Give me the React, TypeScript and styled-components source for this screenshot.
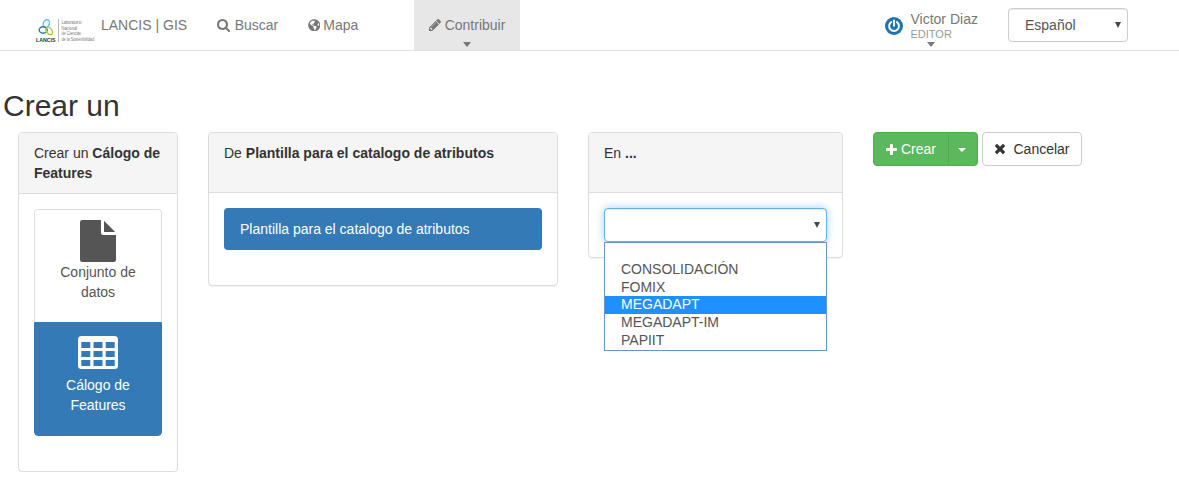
import React from 'react';
import styled, { createGlobalStyle, css } from 'styled-components';
import { FaGlobeAmericas } from 'react-icons/fa';

const GlobalStyle = createGlobalStyle`
  *, *::before, *::after { box-sizing: border-box; }
  body {
    margin: 0;
    background: #fff;
    color: #333;
    font: 14px/20px "Liberation Sans", Arial, sans-serif;
  }
`;

const Navbar = styled.header`
  display: flex;
  align-items: flex-start;
  height: 51px;
  border-bottom: 1px solid #e1e1e1;
  color: #777;
`;

const Brand = styled.div`
  display: flex;
  align-items: flex-start;
  width: 202px;
  padding-left: 35px;
`;

const LogoMark = styled.svg`
  display: block;
  width: 60px;
  height: 25px;
  margin: 18px 6px 0 0;
`;

const BrandName = styled.span`
  padding-top: 15px;
  white-space: nowrap;
`;

const NavItem = styled.a<{ $active?: boolean; $width: number }>`
  display: flex;
  flex-direction: column;
  align-items: center;
  width: ${p => p.$width}px;
  height: 50px;
  padding-top: 15px;
  background: ${p => (p.$active ? '#e7e7e7' : 'transparent')};
`;

const NavLabel = styled.span<{ $gap?: number }>`
  display: flex;
  align-items: center;
  gap: ${p => p.$gap ?? 4}px;
  white-space: nowrap;
`;

const Caret = styled.span<{ $gap?: number; $height?: number }>`
  width: 0;
  height: 0;
  margin-top: ${p => p.$gap ?? 0}px;
  border-top: ${p => p.$height ?? 4}px solid currentColor;
  border-left: 4px solid transparent;
  border-right: 4px solid transparent;
`;

const Spacer = styled.div<{ $width: number }>`
  width: ${p => p.$width}px;
`;

const UserMenu = styled.div`
  display: flex;
  width: 123px;
  margin-left: 365px;
`;

const Avatar = styled.svg`
  width: 18px;
  height: 18px;
  margin: 17px 7.5px 0 0;
`;

const UserText = styled.div`
  display: flex;
  flex-direction: column;
  padding-top: 11px;
  line-height: 16px;
  white-space: nowrap;
`;

const Role = styled.span`
  display: flex;
  flex-direction: column;
  align-items: center;
  align-self: flex-start;
  font-size: 11px;
  line-height: 14px;
  color: #999;

  ${Caret} { color: #777; }
`;

const SelectBox = styled.div<{ $width: number; $focus?: boolean }>`
  display: flex;
  align-items: center;
  justify-content: space-between;
  width: ${p => p.$width}px;
  height: 34px;
  padding: 0 6px 0 16px;
  border: 1px solid #ccc;
  border-radius: 4px;
  background: #fff;
  color: #555;
  box-shadow: inset 0 1px 1px rgba(0, 0, 0, 0.075);
  ${p => p.$focus && css`
    border-color: #66afe9;
    box-shadow: inset 0 1px 1px rgba(0, 0, 0, 0.075), 0 0 8px rgba(102, 175, 233, 0.6);
  `}
`;

const LanguageSelect = styled(SelectBox)`
  margin-top: 8px;
`;

const Arrow = styled.svg`
  width: 6px;
  height: 6px;
  fill: #484848;
`;

const Title = styled.h1`
  margin: 38px 0 10px 3px;
  font-size: 30px;
  font-weight: 400;
  line-height: 33px;
`;

const Columns = styled.main`
  display: flex;
  align-items: flex-start;
  gap: 30px;
  padding-left: 18px;
`;

const Panel = styled.section<{ $width: number }>`
  width: ${p => p.$width}px;
  border: 1px solid #ddd;
  border-radius: 4px;
  background: #fff;
  box-shadow: 0 1px 1px rgba(0, 0, 0, 0.05);
`;

const PanelHeading = styled.div<{ $height: number }>`
  height: ${p => p.$height}px;
  padding: 10px 15px;
  border-bottom: 1px solid #ddd;
  border-radius: 3px 3px 0 0;
  background: #f5f5f5;
`;

const PanelBody = styled.div`
  padding: 15px;
`;

const ListGroup = styled.div`
  display: flex;
  flex-direction: column;
  margin-bottom: 20px;
  border-radius: 4px;
  overflow: hidden;
`;

const TypeOption = styled.a<{ $active?: boolean }>`
  display: flex;
  flex-direction: column;
  align-items: center;
  height: ${p => (p.$active ? 114 : 113)}px;
  padding: ${p => (p.$active ? '13px 15px' : '10px 15px')};
  border: 1px solid ${p => (p.$active ? '#337ab7' : '#ddd')};
  border-bottom-width: ${p => (p.$active ? 1 : 0)}px;
  border-radius: ${p => (p.$active ? '0 0 4px 4px' : '4px 4px 0 0')};
  background: ${p => (p.$active ? '#337ab7' : '#fff')};
  color: ${p => (p.$active ? '#fff' : '#555')};
  text-align: center;

  svg { flex: none; fill: currentColor; }
`;

const TypeLabel = styled.span<{ $gap?: number }>`
  width: 90px;
  margin-top: ${p => p.$gap ?? 0}px;
`;

const TemplateOption = styled.a`
  height: 42px;
  padding: 11px 16px;
  background: #337ab7;
  color: #fff;
`;

const SelectWrap = styled.div`
  position: relative;
`;

const OptionList = styled.div`
  position: absolute;
  top: 34px;
  left: 0;
  width: 223px;
  height: 109px;
  padding-top: 17px;
  border: 1px solid #6b93cd;
  background: #fff;
  color: #555;
`;

const Option = styled.div<{ $selected?: boolean }>`
  height: 18px;
  padding-left: 16px;
  line-height: 18px;

  &:nth-child(n + 3) { line-height: 16px; }

  ${p => p.$selected && css`
    background: #1e90ff;
    color: #fff;
  `}
`;

const Actions = styled.div`
  display: flex;
  gap: 4px;
`;

const ButtonGroup = styled.div`
  display: flex;
`;

const Button = styled.button<{ $kind: 'main' | 'toggle' | 'plain' }>`
  display: flex;
  align-items: center;
  justify-content: center;
  height: 34px;
  padding: 0;
  border: 1px solid #4cae4c;
  background: #5cb85c;
  color: #fff;
  font: inherit;
  ${p => p.$kind === 'main' && css`
    width: 76px;
    gap: 4px;
    border-radius: 4px 0 0 4px;
  `}
  ${p => p.$kind === 'toggle' && css`
    width: 30px;
    margin-left: -1px;
    padding: 2px 3px 0 0;
    border-radius: 0 4px 4px 0;
  `}
  ${p => p.$kind === 'plain' && css`
    width: 100px;
    gap: 8px;
    padding-left: 1px;
    border-color: #ccc;
    border-radius: 4px;
    background: #fff;
    color: #333;
  `}
`;

const Glyph = styled.svg<{ $size: number }>`
  flex: none;
  width: ${p => p.$size}px;
  height: ${p => p.$size}px;
  fill: currentColor;
`;

const SearchIcon = () => (
  <Glyph $size={13} viewBox="64 128 1664 1664">
    <path d="M1216 832q0-185-131.5-316.5t-316.5-131.5-316.5 131.5-131.5 316.5 131.5 316.5 316.5 131.5 316.5-131.5 131.5-316.5zm512 832q0 52-38 90t-90 38q-54 0-90-38l-343-342q-179 124-399 124-143 0-273.5-55.5t-225-150-150-225-55.5-273.5 55.5-273.5 150-225 225-150 273.5-55.5 273.5 55.5 225 150 150 225 55.5 273.5q0 220-124 399l343 343q37 37 37 90z" />
  </Glyph>
);

const PencilIcon = () => (
  <Glyph $size={12} viewBox="128 149 1515 1515">
    <path d="M491 1536l91-91-235-235-91 91v107h128v128h107zm523-928q0-22-22-22-10 0-17 7l-542 542q-7 7-7 17 0 22 22 22 10 0 17-7l542-542q7-7 7-17zm-54-192l416 416-832 832h-416v-416zm683 96q0 53-37 90l-166 166-416-416 166-165q36-38 90-38 53 0 91 38l235 234q37 39 37 91z" />
  </Glyph>
);

const PlusIcon = () => (
  <Glyph $size={11} viewBox="192 128 1408 1408">
    <path d="M1600 736v192q0 40-28 68t-68 28h-416v416q0 40-28 68t-68 28h-192q-40 0-68-28t-28-68v-416h-416q-40 0-68-28t-28-68v-192q0-40 28-68t68-28h416v-416q0-40 28-68t68-28h192q40 0 68 28t28 68v416h416q40 0 68 28t28 68z" />
  </Glyph>
);

const CloseIcon = () => (
  <Glyph $size={10} viewBox="302 366 1188 1188">
    <path d="M1490 1322q0 40-28 68l-136 136q-28 28-68 28t-68-28l-294-294-294 294q-28 28-68 28t-68-28l-136-136q-28-28-28-68t28-68l294-294-294-294q-28-28-28-68t28-68l136-136q28-28 68-28t68 28l294 294 294-294q28-28 68-28t68 28l136 136q28 28 28 68t-28 68l-294 294 294 294q28 28 28 68z" />
  </Glyph>
);

const FileIcon = () => (
  <svg width="36" height="42" viewBox="0 0 36 42">
    <path d="M21 0v12.800a2.200 2.200 0 0 0 2.200 2.200H36v24.800a2.200 2.200 0 0 1-2.200 2.200H2.200A2.200 2.200 0 0 1 0 39.800V2.200A2.200 2.200 0 0 1 2.200 0zM24 .8l11.200 11.200H24z" />
  </svg>
);

const TableIcon = () => (
  <svg width="40" height="33" viewBox="0 0 40 33">
    <path
      fillRule="evenodd"
      d="M3.500 0h33A3.500 3.500 0 0 1 40 3.500v26a3.500 3.500 0 0 1-3.500 3.500h-33A3.500 3.500 0 0 1 0 29.500v-26A3.500 3.500 0 0 1 3.500 0zM3.300 6v6h9V6zM15.500 6v6h9V6zM27.700 6v6h9V6zM3.300 15v6h9v-6zM15.500 15v6h9v-6zM27.700 15v6h9v-6zM3.300 24v6h9v-6zM15.500 24v6h9v-6zM27.700 24v6h9v-6z"
    />
  </svg>
);

const Logo = () => (
  <LogoMark viewBox="0 0 60 25">
    <g fill="none" strokeWidth="1.4">
      <ellipse cx="11.300" cy="5.500" rx="3" ry="4" stroke="#65bfe4" transform="rotate(20 11.300 5.500)" />
      <ellipse cx="8.200" cy="12" rx="4" ry="3.200" stroke="#2878ad" />
      <ellipse cx="14.200" cy="12.800" rx="2.700" ry="4.200" stroke="#b4c94c" transform="rotate(-38 14.200 12.800)" />
    </g>
    <text x="1" y="23.700" fontSize="5" fontWeight="700" fill="#333" textLength="19.500" lengthAdjust="spacingAndGlyphs">LANCIS</text>
    <path d="M23.500 1v23" stroke="#aaa" strokeWidth=".8" />
    <g fontSize="4.800" fill="#777">
      <text x="26.500" y="5.700" textLength="20" lengthAdjust="spacingAndGlyphs">Laboratorio</text>
      <text x="26.500" y="11.700" textLength="15.500" lengthAdjust="spacingAndGlyphs">Nacional</text>
      <text x="26.500" y="17.400" textLength="19.500" lengthAdjust="spacingAndGlyphs">de Ciencias</text>
      <text x="26.500" y="23.200" textLength="32.500" lengthAdjust="spacingAndGlyphs">de la Sostenibilidad</text>
    </g>
  </LogoMark>
);

const DownArrow = () => (
  <Arrow viewBox="0 0 6 6">
    <path d="M0 0h6L3 6z" />
  </Arrow>
);

const projects = ['CONSOLIDACIÓN', 'FOMIX', 'MEGADAPT', 'MEGADAPT-IM', 'PAPIIT'];

export default function App() {
  return (
    <>
      <GlobalStyle />
      <Navbar>
        <Brand>
          <Logo />
          <BrandName>LANCIS | GIS</BrandName>
        </Brand>
        <NavItem $width={91}>
          <NavLabel $gap={5}><SearchIcon />Buscar</NavLabel>
        </NavItem>
        <NavItem $width={80}>
          <NavLabel $gap={3}><FaGlobeAmericas size={12.5} />Mapa</NavLabel>
        </NavItem>
        <Spacer $width={41} />
        <NavItem $width={106} $active>
          <NavLabel><PencilIcon />Contribuir</NavLabel>
          <Caret $gap={7} $height={5} />
        </NavItem>
        <UserMenu>
          <Avatar viewBox="0 0 18 18">
            <circle cx="9" cy="9" r="9" fill="#1a75b0" />
            <path d="M6.300 5A4.900 4.900 0 1 0 11.900 5.100M9 3.500v5.300" fill="none" stroke="#fff" strokeWidth="2" strokeLinecap="round" />
          </Avatar>
          <UserText>
            Victor Diaz
            <Role>EDITOR<Caret $gap={1} $height={5} /></Role>
          </UserText>
        </UserMenu>
        <LanguageSelect $width={120}>Español<DownArrow /></LanguageSelect>
      </Navbar>

      <Title>Crear un</Title>

      <Columns>
        <Panel $width={160}>
          <PanelHeading $height={61}>Crear un <b>Cálogo de Features</b></PanelHeading>
          <PanelBody>
            <ListGroup>
              <TypeOption>
                <FileIcon />
                <TypeLabel>Conjunto de datos</TypeLabel>
              </TypeOption>
              <TypeOption $active>
                <TableIcon />
                <TypeLabel $gap={6}>Cálogo de Features</TypeLabel>
              </TypeOption>
            </ListGroup>
          </PanelBody>
        </Panel>

        <Panel $width={350}>
          <PanelHeading $height={60}>De <b>Plantilla para el catalogo de atributos</b></PanelHeading>
          <PanelBody>
            <ListGroup>
              <TemplateOption>Plantilla para el catalogo de atributos</TemplateOption>
            </ListGroup>
          </PanelBody>
        </Panel>

        <Panel $width={255}>
          <PanelHeading $height={60}>En <b>...</b></PanelHeading>
          <PanelBody>
            <SelectWrap>
              <SelectBox $width={223} $focus><span /><DownArrow /></SelectBox>
              <OptionList>
                {projects.map(name => (
                  <Option key={name} $selected={name === 'MEGADAPT'}>{name}</Option>
                ))}
              </OptionList>
            </SelectWrap>
          </PanelBody>
        </Panel>

        <Actions>
          <ButtonGroup>
            <Button $kind="main"><PlusIcon />Crear</Button>
            <Button $kind="toggle"><Caret /></Button>
          </ButtonGroup>
          <Button $kind="plain"><CloseIcon />Cancelar</Button>
        </Actions>
      </Columns>
    </>
  );
}
